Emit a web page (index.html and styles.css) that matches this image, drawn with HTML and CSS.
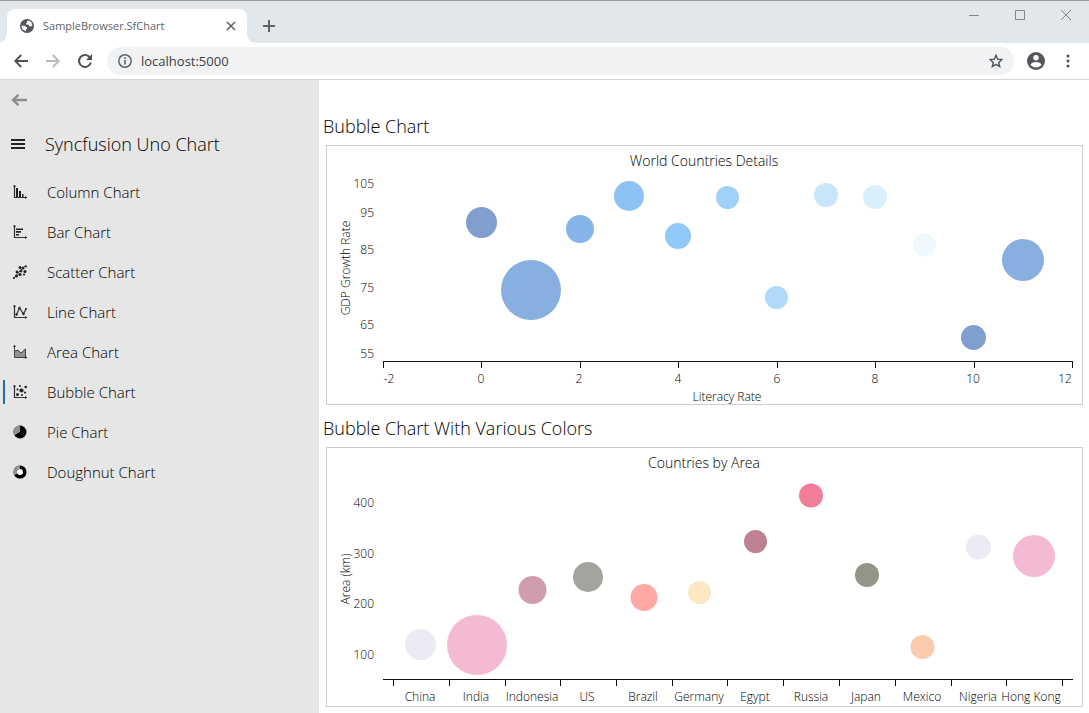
FILE: index.html
```html
<!DOCTYPE html>
<html lang="en">
<head>
<meta charset="utf-8">
<meta name="viewport" content="width=device-width, initial-scale=1">
<title>SampleBrowser.SfChart</title>
<link rel="stylesheet" href="styles.css">
</head>
<body>
<header class="browser">
  <div class="tabstrip">
    <div class="tab">
      <svg class="favicon" viewBox="0 0 14 14" aria-hidden="true"><circle cx="7" cy="7" r="7" fill="#54585c"/><path d="M7.2 1.8h2.4a5.6 5.6 0 0 1 2.8 4.4L11 7.6 9.4 7 8.2 5.6 6 5.4V4.2l1.2-.6z" fill="#fff"/><path d="M1.5 6.6l3 .2 2.6 1.6v1.4l-1.3.6v1.8A5.6 5.6 0 0 1 1.5 6.600z" fill="#fff"/></svg>
      <span class="tab-title">SampleBrowser.SfChart</span>
      <button class="icon-btn tab-close" aria-label="Close tab"><svg width="10" height="10" viewBox="0 0 10 10"><path d="M1 1l8 8M9 1l-8 8" stroke="#5f6368" stroke-width="1.6"/></svg></button>
    </div>
    <button class="icon-btn new-tab" aria-label="New tab"><svg width="12" height="12" viewBox="0 0 12 12"><path d="M6 0v12M0 6h12" stroke="#5f6368" stroke-width="2"/></svg></button>
    <div class="window-buttons">
      <button class="icon-btn" aria-label="Minimize"><svg width="10" height="10" viewBox="0 0 10 10"><path d="M0 5.500h10" stroke="#85898d"/></svg></button>
      <button class="icon-btn" aria-label="Maximize"><svg width="10" height="10" viewBox="0 0 10 10"><path d="M.5.500h9v9h-9z" fill="none" stroke="#85898d"/></svg></button>
      <button class="icon-btn" aria-label="Close"><svg width="10" height="10" viewBox="0 0 10 10"><path d="M0 0l10 10M10 0L0 10" stroke="#85898d"/></svg></button>
    </div>
  </div>
  <div class="toolbar">
    <button class="icon-btn nav-btn" aria-label="Back"><svg width="14" height="14" viewBox="0 0 14 14"><path d="M14 7H1.500M7.200 1L1.200 7l6 6" fill="none" stroke="#4d5156" stroke-width="1.800"/></svg></button>
    <button class="icon-btn nav-btn" aria-label="Forward"><svg width="14" height="14" viewBox="0 0 14 14"><path d="M0 7h12.500M6.800 1l6 6-6 6" fill="none" stroke="#b6b8ba" stroke-width="1.800"/></svg></button>
    <button class="icon-btn nav-btn" aria-label="Reload"><svg width="16" height="16" viewBox="0 0 16 16"><path d="M13.800 9.500A6 6 0 1 1 12.200 3.700L13 4.500" fill="none" stroke="#4d5156" stroke-width="2"/><path d="M15 1v6H9z" fill="#4d5156"/></svg></button>
    <div class="address">
      <svg width="14" height="14" viewBox="0 0 14 14" aria-hidden="true"><circle cx="7" cy="7" r="6.200" fill="none" stroke="#5f6368" stroke-width="1.500"/><path d="M7 6v4.500M7 3.300v1.600" stroke="#5f6368" stroke-width="1.600"/></svg>
      <input class="url" type="text" value="localhost:5000" aria-label="Address">
      <button class="icon-btn" aria-label="Bookmark"><svg width="14" height="14" viewBox="0 0 14 14"><path d="M7 1.300l1.700 3.900 4.200.4-3.200 2.800 1 4.100L7 10.300l-3.700 2.200 1-4.100L1.100 5.600l4.200-.4z" fill="none" stroke="#4d5156" stroke-width="1.400"/></svg></button>
    </div>
    <button class="icon-btn profile" aria-label="Profile"><svg width="18" height="18" viewBox="0 0 18 18"><circle cx="9" cy="9" r="9" fill="#54585c"/><circle cx="9" cy="5.700" r="2.700" fill="#fff"/><path d="M3.500 12.500C4.300 10.800 7 10 9 10s4.700.8 5.500 2.500C13.300 14.500 11.200 15.500 9 15.500s-4.300-1-5.500-3z" fill="#fff"/></svg></button>
    <button class="icon-btn more" aria-label="Menu"><svg width="4" height="14" viewBox="0 0 4 14"><g fill="#4d5156"><circle cx="2" cy="2" r="1.500"/><circle cx="2" cy="7" r="1.500"/><circle cx="2" cy="12" r="1.500"/></g></svg></button>
  </div>
</header>

<div class="app">
  <aside class="sidebar">
    <button class="icon-btn back" aria-label="Go back"><svg width="16" height="12" viewBox="0 0 16 12"><path d="M16 6H2M7.500.8L2 6l5.500 5.200" fill="none" stroke="#8c8c8c" stroke-width="2.400"/></svg></button>
    <div class="pane-head">
      <button class="icon-btn menu" aria-label="Toggle menu"><svg width="14" height="10" viewBox="0 0 14 10"><path d="M0 1h14M0 5h14M0 9h14" stroke="#222" stroke-width="2"/></svg></button>
      <h1 class="pane-title">Syncfusion Uno Chart</h1>
    </div>
    <nav class="nav">
      <a class="nav-item" href="#column"><svg class="nav-icon" viewBox="0 0 14 14"><path d="M1.500 0v12.500H14" class="axis"/><path d="M0 2l1.500-2L3 2zM12 11l2 1.500-2 1.500z"/><path d="M3 3h2v9H3zM6 6h2v6H6zM9 9h1.500v3H9z"/></svg>Column Chart</a>
      <a class="nav-item" href="#bar"><svg class="nav-icon" viewBox="0 0 14 14"><path d="M1.500 0v12.500H14" class="axis"/><path d="M0 2l1.500-2L3 2zM12 11l2 1.500-2 1.500z"/><path d="M3 3.500h7v1.600H3zM3 6h5v1.800H3zM3 9h3v1.600H3z"/></svg>Bar Chart</a>
      <a class="nav-item" href="#scatter"><svg class="nav-icon" viewBox="0 0 14 14"><path d="M0 14l7-8M6 7l7-7" class="thin"/><circle cx="7" cy="2.500" r="1.500"/><circle cx="10" cy="3" r="1.500"/><circle cx="13" cy="1.500" r="1"/><circle cx="8" cy="6" r="1.400"/><circle cx="12" cy="6.500" r="1.600"/><circle cx="4" cy="7" r="1.400"/><circle cx="7" cy="9.500" r="1.600"/><circle cx="11" cy="9.500" r="1.100"/><circle cx="3.500" cy="11" r="1.500"/><circle cx="1" cy="13" r="1"/></svg>Scatter Chart</a>
      <a class="nav-item" href="#line"><svg class="nav-icon" viewBox="0 0 14 14"><path d="M1.500 0v12.500H14" class="axis"/><path d="M0 2l1.500-2L3 2zM12 11l2 1.500-2 1.500z"/><path d="M3.500 9.500L6.500 3l4 6L13 4" class="axis"/><circle cx="3.500" cy="9.500" r="1.200"/><circle cx="6.500" cy="3" r="1.200"/><circle cx="10.500" cy="9" r="1.200"/><circle cx="13" cy="4" r="1"/></svg>Line Chart</a>
      <a class="nav-item" href="#area"><svg class="nav-icon" viewBox="0 0 14 14"><path d="M2 6l3-1 3 3 4.500-4v8H2z" class="soft"/><path d="M1.500 0v12.500H14M2 6l3-1 3 3 4.500-4v8" class="thin"/><path d="M0 2l1.500-2L3 2zM12 11l2 1.500-2 1.500z"/></svg>Area Chart</a>
      <a class="nav-item selected" href="#bubble" aria-current="page"><svg class="nav-icon" viewBox="0 0 14 14"><path d="M1.500 0v12.500H14" class="axis"/><path d="M0 2l1.500-2L3 2zM12 11l2 1.500-2 1.500z"/><circle cx="4.500" cy="4.500" r="1"/><circle cx="7" cy="1" r="1"/><circle cx="8.500" cy="5.500" r="2.100"/><circle cx="12.700" cy="2" r="1.300"/><circle cx="12" cy="7.500" r="1.100"/><circle cx="4.500" cy="9.500" r="1.500"/><circle cx="9" cy="10" r="1"/></svg>Bubble Chart</a>
      <a class="nav-item" href="#pie"><svg class="nav-icon" viewBox="0 0 14 14"><circle cx="7" cy="7" r="6.500" fill="#000"/><path d="M7 7V.500A6.500 6.500 0 0 0 1.400 10.300z" class="soft"/></svg>Pie Chart</a>
      <a class="nav-item" href="#doughnut"><svg class="nav-icon" viewBox="0 0 14 14"><circle cx="7" cy="7" r="4.800" fill="#fff" stroke="#000" stroke-width="3.500"/><path d="M7 2.200A4.800 4.800 0 0 0 2.800 9.300" fill="none" stroke="#929292" stroke-width="3.500"/></svg>Doughnut Chart</a>
    </nav>
  </aside>

  <main class="content">
    <section class="sample">
      <h2 class="sample-title">Bubble Chart</h2>
      <div class="card">
        <svg class="chart" viewBox="0 0 755 258" role="img" aria-label="World Countries Details">
          <text class="title" x="377" y="20">World Countries Details</text>
          <g class="y-labels">
            <text x="47" y="42">105</text><text x="47" y="71">95</text><text x="47" y="108">85</text><text x="47" y="146">75</text><text x="47" y="183">65</text><text x="47" y="212">55</text>
          </g>
          <text class="label" transform="translate(23 122) rotate(-90)">GDP Growth Rate</text>
          <path class="line" d="M56 215.500H746M56.500 215v7M154.500 215v7M253.500 215v7M351.500 215v7M450.500 215v7M548.500 215v7M647.500 215v7M745.500 215v7"/>
          <g class="label">
            <text x="62" y="237">-2</text><text x="154" y="237">0</text><text x="252" y="237">2</text><text x="351" y="237">4</text><text x="450" y="237">6</text><text x="548" y="237">8</text><text x="646" y="237">10</text><text x="738" y="237">12</text>
            <text x="400" y="255">Literacy Rate</text>
          </g>
          <circle cx="154.500" cy="76.500" r="15.500" fill="#809fcf"/>
          <circle cx="204" cy="144" r="30" fill="#87b0e0"/>
          <circle cx="253" cy="83" r="14" fill="#86b4e8"/>
          <circle cx="302" cy="50" r="15" fill="#8cc2f3"/>
          <circle cx="351" cy="90" r="13" fill="#90c8f8"/>
          <circle cx="400.500" cy="51.500" r="11.500" fill="#9fd1f9"/>
          <circle cx="449.500" cy="151.500" r="11.500" fill="#b1dafa"/>
          <circle cx="499" cy="49" r="12" fill="#c8e5fa"/>
          <circle cx="548" cy="51" r="12" fill="#daeffc"/>
          <circle cx="597.500" cy="99" r="11.500" fill="#eef8fd"/>
          <circle cx="646.500" cy="191.500" r="12.500" fill="#809fcf"/>
          <circle cx="696" cy="114" r="21" fill="#87b0e0"/>
        </svg>
      </div>
    </section>
    <section class="sample">
      <h2 class="sample-title">Bubble Chart With Various Colors</h2>
      <div class="card">
        <svg class="chart" viewBox="0 0 755 258" role="img" aria-label="Countries by Area">
          <text class="title" x="377" y="20">Countries by Area</text>
          <g class="y-labels">
            <text x="47" y="59">400</text><text x="47" y="110">300</text><text x="47" y="160">200</text><text x="47" y="211">100</text>
          </g>
          <text class="label" transform="translate(23 131) rotate(-90)">Area (km)</text>
          <path class="line" d="M56 231.500H746M66.500 231v7M122.500 231v7M178.500 231v7M233.500 231v7M289.500 231v7M345.500 231v7M400.500 231v7M456.500 231v7M512.500 231v7M568.500 231v7M624.500 231v7M679.500 231v7M735.500 231v7"/>
          <g class="label">
            <text x="93" y="253">China</text><text x="149" y="253">India</text><text x="205" y="253">Indonesia</text><text x="260" y="253">US</text><text x="316" y="253">Brazil</text><text x="372" y="253">Germany</text><text x="428" y="253">Egypt</text><text x="484" y="253">Russia</text><text x="539" y="253">Japan</text><text x="595" y="253">Mexico</text><text x="651" y="253">Nigeria</text><text x="704" y="253">Hong Kong</text>
          </g>
          <circle cx="93.500" cy="196.500" r="15.500" fill="#ecebf3"/>
          <circle cx="150" cy="197" r="30" fill="#f4bad3"/>
          <circle cx="205.500" cy="142" r="14" fill="#d09dac"/>
          <circle cx="261" cy="129" r="15" fill="#a1a59e"/>
          <circle cx="317" cy="149.500" r="13.500" fill="#fea9a4"/>
          <circle cx="372.500" cy="144.500" r="11.500" fill="#fde8c4"/>
          <circle cx="428.500" cy="93.500" r="11.500" fill="#bd8291"/>
          <circle cx="484" cy="47.500" r="12" fill="#f27d99"/>
          <circle cx="540" cy="127" r="12" fill="#959587"/>
          <circle cx="595.500" cy="199" r="12" fill="#fbcbae"/>
          <circle cx="651.500" cy="99" r="12.500" fill="#ecebf3"/>
          <circle cx="707" cy="108" r="21" fill="#f4bad3"/>
        </svg>
      </div>
    </section>
  </main>
</div>
</body>
</html>
```
FILE: styles.css
```css
* { box-sizing: border-box; }
body {
  margin: 0;
  min-height: 100vh;
  display: flex;
  flex-direction: column;
  font-family: "Open Sans", "Noto Sans", sans-serif;
  color: #000;
  background: #fff;
}
svg { display: block; flex: none; }
.icon-btn {
  display: flex;
  align-items: center;
  justify-content: center;
  padding: 0;
  border: 0;
  background: none;
}

/* Browser frame */
.tabstrip {
  display: flex;
  align-items: flex-end;
  height: 43px;
  padding-left: 7px;
  border-top: 1px solid #96999e;
  background: #e2e7eb;
}
.tab {
  position: relative;
  display: flex;
  align-items: center;
  gap: 9px;
  width: 240px;
  height: 34px;
  padding: 0 11px 0 13px;
  border-radius: 8px 8px 0 0;
  background: #fff;
}
.tab::before, .tab::after {
  content: "";
  position: absolute;
  bottom: 0;
  width: 8px;
  height: 8px;
}
.tab::before { right: 100%; background: radial-gradient(circle at 0 0, transparent 7px, #fff 8px); }
.tab::after { left: 100%; background: radial-gradient(circle at 100% 0, transparent 7px, #fff 8px); }
.favicon { width: 14px; height: 14px; }
.tab-title { flex: 1; font-size: 11px; line-height: 16px; color: #5f6368; white-space: nowrap; }
.new-tab { width: 28px; height: 34px; margin-left: 8px; }
.window-buttons { display: flex; align-self: flex-start; margin-left: auto; }
.window-buttons .icon-btn { width: 46px; height: 28px; }
.toolbar {
  display: flex;
  align-items: center;
  height: 37px;
  padding: 0 12px 0 5px;
  border-bottom: 1px solid #d5d6d8;
}
.nav-btn { width: 32px; height: 28px; }
.address {
  flex: 1;
  display: flex;
  align-items: center;
  gap: 9px;
  height: 28px;
  margin-left: 6px;
  padding: 0 11px;
  border-radius: 14px;
  background: #f1f2f4;
}
.url {
  flex: 1;
  min-width: 0;
  padding: 0;
  border: 0;
  outline: 0;
  background: none;
  font: 13px/20px "Open Sans", "Noto Sans", sans-serif;
  color: #3c4043;
}
.profile { width: 18px; margin-left: 13px; }
.more { width: 18px; margin-left: 14px; }

/* Application */
.app { flex: 1; display: flex; font-weight: 350; }
.sidebar { flex: none; width: 319px; background: #e5e6e5; }
.back { width: 38px; height: 40px; }
.pane-head { display: flex; align-items: center; height: 48px; }
.menu { width: 36px; height: 40px; }
.pane-title { margin: 0 0 0 9px; font-size: 18px; line-height: 24px; font-weight: 300; }
.nav { display: flex; flex-direction: column; padding-top: 4px; }
.nav-item {
  position: relative;
  display: flex;
  align-items: center;
  gap: 20px;
  height: 40px;
  padding-left: 13px;
  font-size: 15px;
  line-height: 20px;
  font-weight: 300;
  color: #000;
  text-decoration: none;
}
.nav-item.selected::before {
  content: "";
  position: absolute;
  left: 3px;
  top: 8px;
  width: 2px;
  height: 24px;
  background: #1a6fb5;
}
.nav-icon { width: 14px; height: 14px; fill: #222; }
.nav-icon .axis { fill: none; stroke: #333; stroke-width: 1.2; }
.nav-icon .thin { fill: none; stroke: #444; stroke-width: 1; }
.nav-icon .soft { fill: #929292; }

.content { flex: 1; min-width: 0; padding: 24px 6px 6px 4px; }
.sample-title {
  display: flex;
  align-items: center;
  height: 41px;
  margin: 0;
  padding-top: 2px;
  font-size: 18px;
  line-height: 24px;
  font-weight: 300;
}
.sample + .sample .sample-title { height: 42px; padding-top: 4px; }
.card { margin-left: 3px; border: 1px solid #cdcdcd; }
.chart { width: 100%; height: auto; }
.chart text { font-family: "Open Sans", "Noto Sans", sans-serif; font-weight: 300; fill: #000; }
.chart .title { font-size: 14px; text-anchor: middle; }
.label { font-size: 12px; text-anchor: middle; }
.y-labels { font-size: 12px; text-anchor: end; }
.line { fill: none; stroke: #111; stroke-width: 1; shape-rendering: crispEdges; }
```
